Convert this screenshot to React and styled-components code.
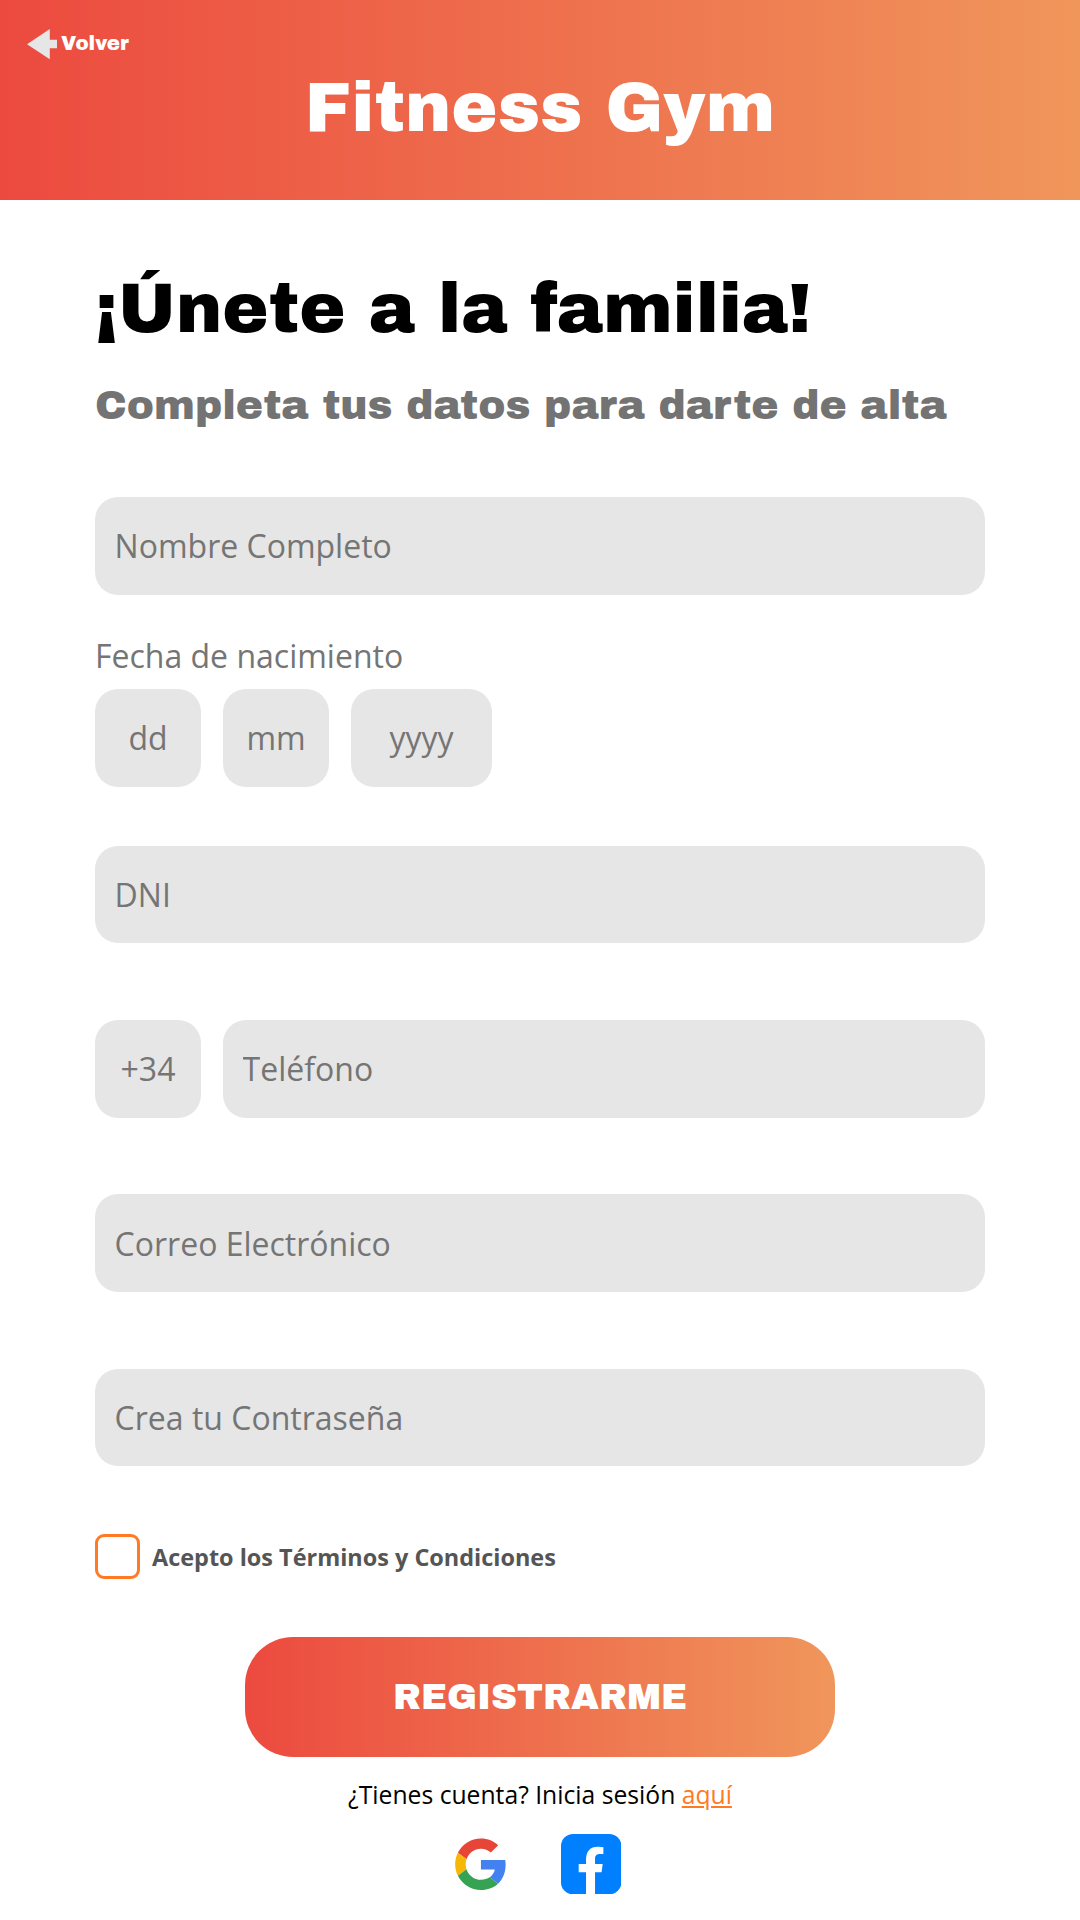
import React from 'react';
import styled, { createGlobalStyle } from 'styled-components';

const display = '"Archivo Black", Inter, sans-serif';
const body = '"Open Sans", sans-serif';
const brand = 'linear-gradient(90deg, #ec4a3f 0%, #ee6f4d 50%, #f0965b 100%)';

const GlobalStyle = createGlobalStyle`
  *, *::before, *::after { box-sizing: border-box; }
  body { margin: 0; background: #fff; }
`;

const Page = styled.div`
  display: flex;
  flex-direction: column;
  width: 1080px;
  height: 1920px;
  overflow: hidden;
  background: #fff;
  font-family: ${body};
`;

const Header = styled.header`
  height: 200px;
  padding-top: 29px;
  background: ${brand};
  color: #fff;
`;

const BackLink = styled.a`
  display: flex;
  align-items: center;
  gap: 4px;
  width: max-content;
  height: 30px;
  margin-left: 27px;
  color: #fff;
  font: 400 19.8px/30px ${display};
  text-decoration: none;
`;

const Brand = styled.h1`
  margin: 9px 0 0;
  font: 400 69.4px/80px ${display};
  text-align: center;
`;

const Main = styled.main`
  display: flex;
  flex-direction: column;
  padding: 69px 95px 0;
`;

const Title = styled.h2`
  margin: 0;
  font: 400 69.4px/80px ${display};
  color: #000;
`;

const Subtitle = styled.h3`
  margin: 32px 0 66px;
  font: 400 40.9px/50px ${display};
  color: #737373;
`;

const Form = styled.form`
  display: flex;
  flex-direction: column;
`;

const Row = styled.div`
  display: flex;
  gap: 22px;
  margin-top: ${(p) => p.$top || 0}px;
`;

const Input = styled.input`
  flex: ${(p) => (p.$width ? 'none' : '1')};
  width: ${(p) => (p.$width ? `${p.$width}px` : 'auto')};
  min-width: 0;
  height: 97.8px;
  padding: 0 ${(p) => (p.$width ? 0 : 19.6)}px;
  border: 0;
  border-radius: 23px;
  outline: none;
  background: #e6e6e6;
  font: 400 32px ${body};
  color: #333;
  text-align: ${(p) => (p.$width ? 'center' : 'left')};
  &::placeholder { color: #757575; opacity: 1; }
`;

const Label = styled.div`
  margin: 39.6px 0 10.6px;
  font-size: 32px;
  line-height: 44px;
  color: #757575;
`;

const Terms = styled.label`
  display: flex;
  align-items: center;
  gap: 12px;
  height: 45px;
  margin-top: 67.4px;
  font-size: 23.45px;
  font-weight: 700;
  line-height: 32px;
  color: #555;
`;

const TermsText = styled.span`
  padding-top: 2px;
`;

const Checkbox = styled.input`
  appearance: none;
  width: 45px;
  height: 45px;
  margin: 0;
  border: 3px solid #ff7a22;
  border-radius: 9px;
  background: #fff;
`;

const Submit = styled.button`
  align-self: center;
  width: 590px;
  height: 120px;
  margin-top: 58px;
  padding: 0;
  border: 0;
  border-radius: 48px;
  background: ${brand};
  color: #fff;
  font: 400 36px/50px ${display};
`;

const Login = styled.p`
  margin: 20px 0 0;
  font-size: 24.7px;
  line-height: 36px;
  text-align: center;
  color: #000;
`;

const LoginLink = styled.a`
  color: #ff7a22;
  text-decoration: underline;
`;

const Socials = styled.div`
  display: flex;
  align-items: center;
  gap: 55px;
  height: 61px;
  margin: 21px 0 0 360px;
`;

const BackArrow = () => (
  <svg width="30" height="32" viewBox="0 0 30 32">
    <path d="M0 16.2 22.8 1v10.8H30v8.4h-7.2v11z" fill="#e6e6e6" />
  </svg>
);

const GoogleIcon = () => (
  <svg width="51" height="52" viewBox="0 -0.4 47.2 48.4">
    <path fill="#e64537" d="M24 9.5c3.54 0 6.71 1.22 9.21 3.6l6.85-6.85C35.9 2.38 30.47 0 24 0 14.62 0 6.51 5.38 2.56 13.22l7.98 6.19C12.43 13.72 17.74 9.5 24 9.5z" />
    <path fill="#4380f0" d="M46.98 24.55c0-1.57-.15-3.09-.38-4.55H24v9.02h12.94c-.58 2.96-2.26 5.48-4.78 7.18l7.73 6c4.51-4.18 7.09-10.36 7.09-17.65z" />
    <path fill="#f7b705" d="M10.53 28.59c-.48-1.45-.76-2.99-.76-4.59s.27-3.14.76-4.59l-7.98-6.19C.92 16.46 0 20.12 0 24c0 3.88.92 7.54 2.56 10.78l7.97-6.19z" />
    <path fill="#36a353" d="M24 48c6.48 0 11.93-2.13 15.89-5.81l-7.73-6c-2.15 1.45-4.92 2.3-8.16 2.3-6.26 0-11.57-4.22-13.47-9.91l-7.98 6.19C6.51 42.62 14.62 48 24 48z" />
  </svg>
);

const FacebookIcon = () => (
  <svg width="60.4" height="60.4" viewBox="0 0 181 181">
    <rect width="181" height="181" rx="36" fill="#0080ff" />
    <path fill="#fff" d="M75 181V115H53V90h22V76c0-25 13-38 35-38 7 0 12 .5 17 1.5V60h-9c-12 0-16 5-16 15v15h23l-3.500 25H102v66z" />
  </svg>
);

export default function App() {
  return (
    <>
      <GlobalStyle />
      <Page>
        <Header>
          <BackLink href="#">
            <BackArrow />
            Volver
          </BackLink>
          <Brand>Fitness Gym</Brand>
        </Header>
        <Main>
          <Title>¡Únete a la familia!</Title>
          <Subtitle>Completa tus datos para darte de alta</Subtitle>
          <Form>
            <Row><Input placeholder="Nombre Completo" /></Row>
            <Label>Fecha de nacimiento</Label>
            <Row>
              <Input $width={106} placeholder="dd" />
              <Input $width={106} placeholder="mm" />
              <Input $width={141} placeholder="yyyy" />
            </Row>
            <Row $top={58.9}><Input placeholder="DNI" /></Row>
            <Row $top={76.5}>
              <Input $width={106} placeholder="+34" />
              <Input placeholder="Teléfono" />
            </Row>
            <Row $top={76.5}><Input placeholder="Correo Electrónico" /></Row>
            <Row $top={76.5}><Input placeholder="Crea tu Contraseña" /></Row>
            <Terms>
              <Checkbox type="checkbox" />
              <TermsText>Acepto los Términos y Condiciones</TermsText>
            </Terms>
            <Submit type="button">REGISTRARME</Submit>
          </Form>
          <Login>¿Tienes cuenta? Inicia sesión <LoginLink href="#">aquí</LoginLink></Login>
          <Socials>
            <GoogleIcon />
            <FacebookIcon />
          </Socials>
        </Main>
      </Page>
    </>
  );
}
